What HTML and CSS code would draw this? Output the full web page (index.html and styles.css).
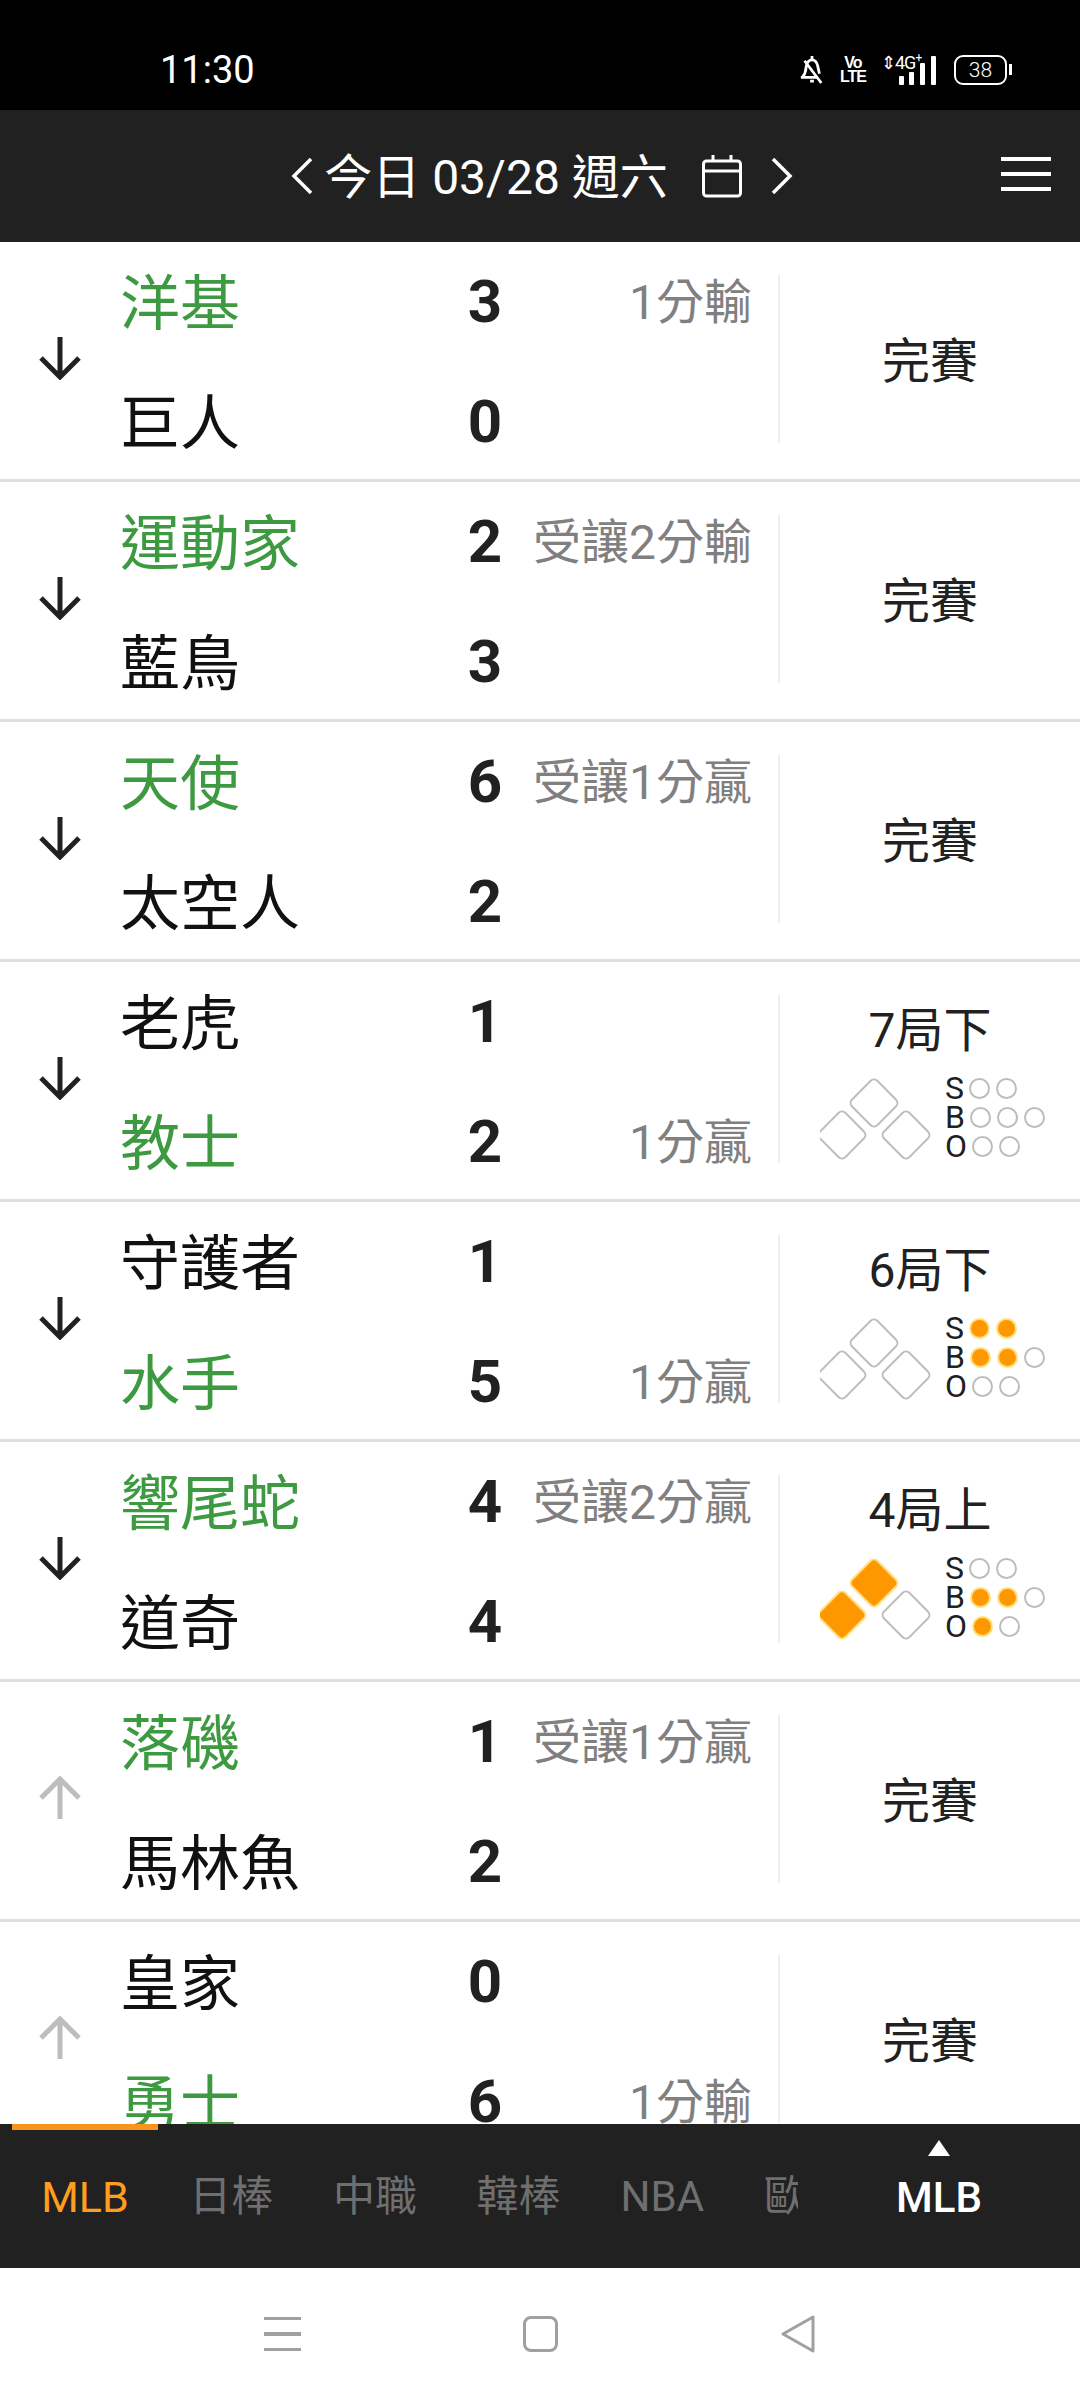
FILE: index.html
```html
<!DOCTYPE html>
<html lang="zh-Hant">
<head>
    <meta charset="UTF-8">
    <meta name="viewport" content="width=device-width, initial-scale=1.0">
    <title>今日賽事</title>
    <link rel="stylesheet" href="styles.css">
</head>
<body>
    <svg class="defs" width="0" height="0">
        <symbol id="arrow" viewBox="0 0 44 44">
            <path d="M22 1V41M3 22L22 41L41 22" fill="none" stroke="currentColor" stroke-width="5"/>
        </symbol>
    </svg>

    <div class="status-bar">
        <span class="clock">11:30</span>
        <div class="status-icons">
            <svg width="26" height="32" viewBox="0 0 28 32" fill="none" stroke="#fff" stroke-width="3">
                <path d="M4 23C8 19 7 15 8 11C9 7 11 5 14 5C17 5 19 7 20 11L22 20M2 24H20M14 1V4M12 28H16M6 6L24 30"/>
            </svg>
            <div class="volte"><span>Vo</span><span>LTE</span></div>
            <div class="signal">
                <span class="net">⇕4G<sup>+</sup></span>
                <svg width="38" height="29" viewBox="0 0 38 29" fill="#fff">
                    <rect x="0" y="20" width="5" height="9" rx="1"/>
                    <rect x="10" y="16" width="5" height="13" rx="1"/>
                    <rect x="21" y="7" width="5" height="22" rx="1"/>
                    <rect x="32" y="0" width="5" height="29" rx="1"/>
                </svg>
            </div>
            <div class="battery"><span>38</span></div>
        </div>
    </div>

    <header class="top-bar">
        <div></div>
        <div class="date-nav">
            <svg width="22" height="36" viewBox="0 0 22 36" fill="none" stroke="#fff" stroke-width="3.5"><path d="M20 1L3 18L20 35"/></svg>
            <span class="date-text">今日 03/28 週六</span>
            <svg class="calendar" width="40" height="44" viewBox="0 0 40 44" fill="none" stroke="#fff" stroke-width="3">
                <rect x="1.5" y="7" width="37" height="35" rx="3"/>
                <path d="M1.5 17H38.500M11 1V7M29 1V7"/>
            </svg>
            <svg width="22" height="36" viewBox="0 0 22 36" fill="none" stroke="#fff" stroke-width="3.5"><path d="M2 1L19 18L2 35"/></svg>
        </div>
        <div class="menu-btn"><span></span><span></span><span></span></div>
    </header>

    <main class="game-list">
        <div class="game">
            <svg class="arrow"><use href="#arrow"/></svg>
            <div class="teams">
                <div class="line"><span class="name win">洋基</span><span class="score">3</span><span class="odds">1分輸</span></div>
                <div class="line"><span class="name">巨人</span><span class="score">0</span><span class="odds"></span></div>
            </div>
            <div class="status">完賽</div>
        </div>

        <div class="game">
            <svg class="arrow"><use href="#arrow"/></svg>
            <div class="teams">
                <div class="line"><span class="name win">運動家</span><span class="score">2</span><span class="odds">受讓2分輸</span></div>
                <div class="line"><span class="name">藍鳥</span><span class="score">3</span><span class="odds"></span></div>
            </div>
            <div class="status">完賽</div>
        </div>

        <div class="game">
            <svg class="arrow"><use href="#arrow"/></svg>
            <div class="teams">
                <div class="line"><span class="name win">天使</span><span class="score">6</span><span class="odds">受讓1分贏</span></div>
                <div class="line"><span class="name">太空人</span><span class="score">2</span><span class="odds"></span></div>
            </div>
            <div class="status">完賽</div>
        </div>

        <div class="game">
            <svg class="arrow"><use href="#arrow"/></svg>
            <div class="teams">
                <div class="line"><span class="name">老虎</span><span class="score">1</span><span class="odds"></span></div>
                <div class="line"><span class="name win">教士</span><span class="score">2</span><span class="odds">1分贏</span></div>
            </div>
            <div class="status live">
                <div class="inning">7局下</div>
                <div class="field">
                    <svg class="bases" width="112" height="88" viewBox="0 0 112 88">
                        <rect class="base" x="36" y="10" width="36" height="36" rx="5" transform="rotate(45 54 28)"/>
                        <rect class="base" x="4" y="42" width="36" height="36" rx="5" transform="rotate(45 22 60)"/>
                        <rect class="base" x="68" y="42" width="36" height="36" rx="5" transform="rotate(45 86 60)"/>
                    </svg>
                    <div class="sbo">
                        <div class="count"><b>S</b><i></i><i></i></div>
                        <div class="count"><b>B</b><i></i><i></i><i></i></div>
                        <div class="count"><b>O</b><i></i><i></i></div>
                    </div>
                </div>
            </div>
        </div>

        <div class="game">
            <svg class="arrow"><use href="#arrow"/></svg>
            <div class="teams">
                <div class="line"><span class="name">守護者</span><span class="score">1</span><span class="odds"></span></div>
                <div class="line"><span class="name win">水手</span><span class="score">5</span><span class="odds">1分贏</span></div>
            </div>
            <div class="status live">
                <div class="inning">6局下</div>
                <div class="field">
                    <svg class="bases" width="112" height="88" viewBox="0 0 112 88">
                        <rect class="base" x="36" y="10" width="36" height="36" rx="5" transform="rotate(45 54 28)"/>
                        <rect class="base" x="4" y="42" width="36" height="36" rx="5" transform="rotate(45 22 60)"/>
                        <rect class="base" x="68" y="42" width="36" height="36" rx="5" transform="rotate(45 86 60)"/>
                    </svg>
                    <div class="sbo">
                        <div class="count"><b>S</b><i class="on"></i><i class="on"></i></div>
                        <div class="count"><b>B</b><i class="on"></i><i class="on"></i><i></i></div>
                        <div class="count"><b>O</b><i></i><i></i></div>
                    </div>
                </div>
            </div>
        </div>

        <div class="game">
            <svg class="arrow"><use href="#arrow"/></svg>
            <div class="teams">
                <div class="line"><span class="name win">響尾蛇</span><span class="score">4</span><span class="odds">受讓2分贏</span></div>
                <div class="line"><span class="name">道奇</span><span class="score">4</span><span class="odds"></span></div>
            </div>
            <div class="status live">
                <div class="inning">4局上</div>
                <div class="field">
                    <svg class="bases" width="112" height="88" viewBox="0 0 112 88">
                        <rect class="base on" x="36" y="10" width="36" height="36" rx="5" transform="rotate(45 54 28)"/>
                        <rect class="base on" x="4" y="42" width="36" height="36" rx="5" transform="rotate(45 22 60)"/>
                        <rect class="base" x="68" y="42" width="36" height="36" rx="5" transform="rotate(45 86 60)"/>
                    </svg>
                    <div class="sbo">
                        <div class="count"><b>S</b><i></i><i></i></div>
                        <div class="count"><b>B</b><i class="on"></i><i class="on"></i><i></i></div>
                        <div class="count"><b>O</b><i class="on"></i><i></i></div>
                    </div>
                </div>
            </div>
        </div>

        <div class="game">
            <svg class="arrow up"><use href="#arrow"/></svg>
            <div class="teams">
                <div class="line"><span class="name win">落磯</span><span class="score">1</span><span class="odds">受讓1分贏</span></div>
                <div class="line"><span class="name">馬林魚</span><span class="score">2</span><span class="odds"></span></div>
            </div>
            <div class="status">完賽</div>
        </div>

        <div class="game">
            <svg class="arrow up"><use href="#arrow"/></svg>
            <div class="teams">
                <div class="line"><span class="name">皇家</span><span class="score">0</span><span class="odds"></span></div>
                <div class="line"><span class="name win">勇士</span><span class="score">6</span><span class="odds">1分輸</span></div>
            </div>
            <div class="status">完賽</div>
        </div>
    </main>

    <div class="tab-bar">
        <div class="tabs">
            <div class="tab active">MLB</div>
            <div class="tab">日棒</div>
            <div class="tab">中職</div>
            <div class="tab">韓棒</div>
            <div class="tab">NBA</div>
            <div class="tab">歐洲</div>
        </div>
        <div class="league-pick">
            <span class="caret"></span>
            <span>MLB</span>
        </div>
    </div>

    <nav class="nav-bar">
        <div class="nav-menu"><span></span><span></span><span></span></div>
        <div class="nav-home"></div>
        <svg width="36" height="38" viewBox="0 0 36 38" fill="none" stroke="#a0a0a0" stroke-width="3" stroke-linejoin="round"><path d="M33 2V36L3 19Z"/></svg>
    </nav>
</body>
</html>
```

FILE: styles.css
```css
* {
    margin: 0;
    padding: 0;
    box-sizing: border-box;
}

body {
    width: 1080px;
    height: 2400px;
    display: flex;
    flex-direction: column;
    overflow: hidden;
    background-color: #fff;
    font-family: Roboto, "Noto Sans CJK TC", sans-serif;
    color: #212121;
}

.defs {
    display: none;
}

/* status bar */
.status-bar {
    height: 110px;
    flex-shrink: 0;
    display: flex;
    align-items: center;
    justify-content: space-between;
    padding: 29px 69px 0 160px;
    background-color: #000;
    color: #fff;
}

.clock {
    font-size: 38px;
    font-weight: 400;
}

.status-icons {
    display: flex;
    align-items: center;
    gap: 17px;
}

.volte {
    display: flex;
    flex-direction: column;
    font-family: "Liberation Sans", sans-serif;
    font-size: 16px;
    font-weight: 700;
    letter-spacing: -1px;
    line-height: 14px;
    width: 22px;
    align-items: center;
}

.signal {
    display: flex;
    align-items: flex-end;
    position: relative;
    width: 56px;
    height: 30px;
    justify-content: flex-end;
}

.net {
    position: absolute;
    left: 0;
    top: -3px;
    font-size: 18px;
    letter-spacing: -1px;
    white-space: nowrap;
}

.net sup {
    font-size: 12px;
    line-height: 0;
}

.battery {
    width: 53px;
    height: 30px;
    margin-right: 4px;
    border: 2.5px solid #fff;
    border-radius: 9px;
    display: flex;
    align-items: center;
    justify-content: center;
    font-size: 21px;
    font-weight: 300;
    position: relative;
}

.battery::after {
    content: "";
    position: absolute;
    right: -7px;
    top: 7px;
    width: 3px;
    height: 11px;
    background-color: #fff;
}

/* header */
.top-bar {
    height: 132px;
    flex-shrink: 0;
    display: grid;
    grid-template-columns: 1fr auto 1fr;
    align-items: center;
    background-color: #212121;
    color: #fff;
}

.date-nav {
    display: flex;
    align-items: center;
    margin-left: 4px;
}

.date-text {
    font-size: 48px;
    margin-left: 11px;
    padding-bottom: 6px;
    white-space: nowrap;
}

.calendar {
    margin: 0 29px 0 34px;
}

.menu-btn {
    justify-self: end;
    width: 50px;
    margin-right: 29px;
    margin-bottom: 4px;
    display: flex;
    flex-direction: column;
    gap: 11px;
}

.menu-btn span {
    height: 4px;
    background-color: #fff;
}

/* games */
.game-list {
    flex: 1;
    overflow: hidden;
}

.game {
    height: 240px;
    display: flex;
    align-items: center;
    border-bottom: 3px solid #e0e0e0;
}

.arrow {
    width: 44px;
    height: 44px;
    margin: 0 38px 5px;
    color: #212121;
    flex-shrink: 0;
}

.arrow.up {
    color: #bdbdbd;
    transform: rotate(180deg);
}

.teams {
    width: 632px;
    flex-shrink: 0;
}

.line {
    height: 120px;
    display: grid;
    grid-template-columns: 335px 60px 1fr;
    align-items: center;
}

.name {
    font-size: 60px;
    line-height: 80px;
    padding-top: 8px;
    color: #111;
}

.name.win {
    color: #3e9a41;
}

.score {
    font-size: 60px;
    font-weight: 700;
    padding-top: 2px;
    text-align: center;
}

.odds {
    font-size: 48px;
    line-height: 70px;
    padding-top: 4px;
    color: #808080;
    text-align: right;
    white-space: nowrap;
}

.status {
    width: 302px;
    height: 168px;
    margin-left: 26px;
    margin-bottom: 3px;
    padding-bottom: 4px;
    border-left: 2px solid #eee;
    display: flex;
    align-items: center;
    justify-content: center;
    font-size: 48px;
}

.status.live {
    flex-direction: column;
    align-items: stretch;
    justify-content: flex-start;
    padding-bottom: 0;
}

.inning {
    height: 72px;
    line-height: 72px;
    text-align: center;
}

.field {
    display: flex;
    align-items: flex-start;
    gap: 13px;
    margin-top: 8px;
    padding-left: 40px;
}

.bases {
    flex-shrink: 0;
}

.base {
    fill: #fff;
    stroke: #bdbdbd;
    stroke-width: 2;
}

.base.on {
    fill: #ff9800;
    stroke: #ffe082;
}

.sbo {
    display: flex;
    flex-direction: column;
    margin-top: -1px;
}

.count {
    height: 29px;
    display: flex;
    align-items: center;
    gap: 6px;
}

.count b {
    font-size: 32px;
    line-height: 29px;
    font-weight: 400;
    margin-right: -1px;
}

.count i {
    width: 21px;
    height: 21px;
    border: 2px solid #bdbdbd;
    border-radius: 50%;
}

.count i.on {
    background-color: #ff9800;
    border-color: #ffe082;
}

/* bottom tabs */
.tab-bar {
    height: 144px;
    flex-shrink: 0;
    display: flex;
    background-color: #212121;
}

.tabs {
    width: 798px;
    overflow: hidden;
    display: flex;
    padding-left: 12px;
    flex-shrink: 0;
}

.tab {
    width: 146px;
    flex-shrink: 0;
    padding-top: 48px;
    font-size: 42px;
    line-height: 50px;
    text-align: center;
    color: #6f6f6f;
    white-space: nowrap;
}

.tab + .tab {
    margin-left: -2.300px;
}

.tab.active {
    font-size: 43px;
    margin-right: 2.500px;
    color: #ff9d1e;
    box-shadow: inset 0 6px 0 #f7941d;
}

.league-pick {
    width: 282px;
    display: flex;
    flex-direction: column;
    align-items: center;
    padding-top: 16px;
    font-size: 42px;
    font-weight: 500;
    color: #fff;
}

.caret {
    width: 0;
    height: 0;
    margin-bottom: 17px;
    border-left: 11px solid transparent;
    border-right: 11px solid transparent;
    border-bottom: 16px solid #fff;
}

/* android nav */
.nav-bar {
    height: 132px;
    flex-shrink: 0;
    display: flex;
    align-items: center;
    padding: 0 264px;
    justify-content: space-between;
    background-color: #fff;
}

.nav-menu {
    width: 37px;
    display: flex;
    flex-direction: column;
    gap: 12px;
}

.nav-menu span {
    height: 3.500px;
    background-color: #a0a0a0;
}

.nav-home {
    width: 35px;
    height: 36px;
    border: 3px solid #a0a0a0;
    border-radius: 8px;
}
```
